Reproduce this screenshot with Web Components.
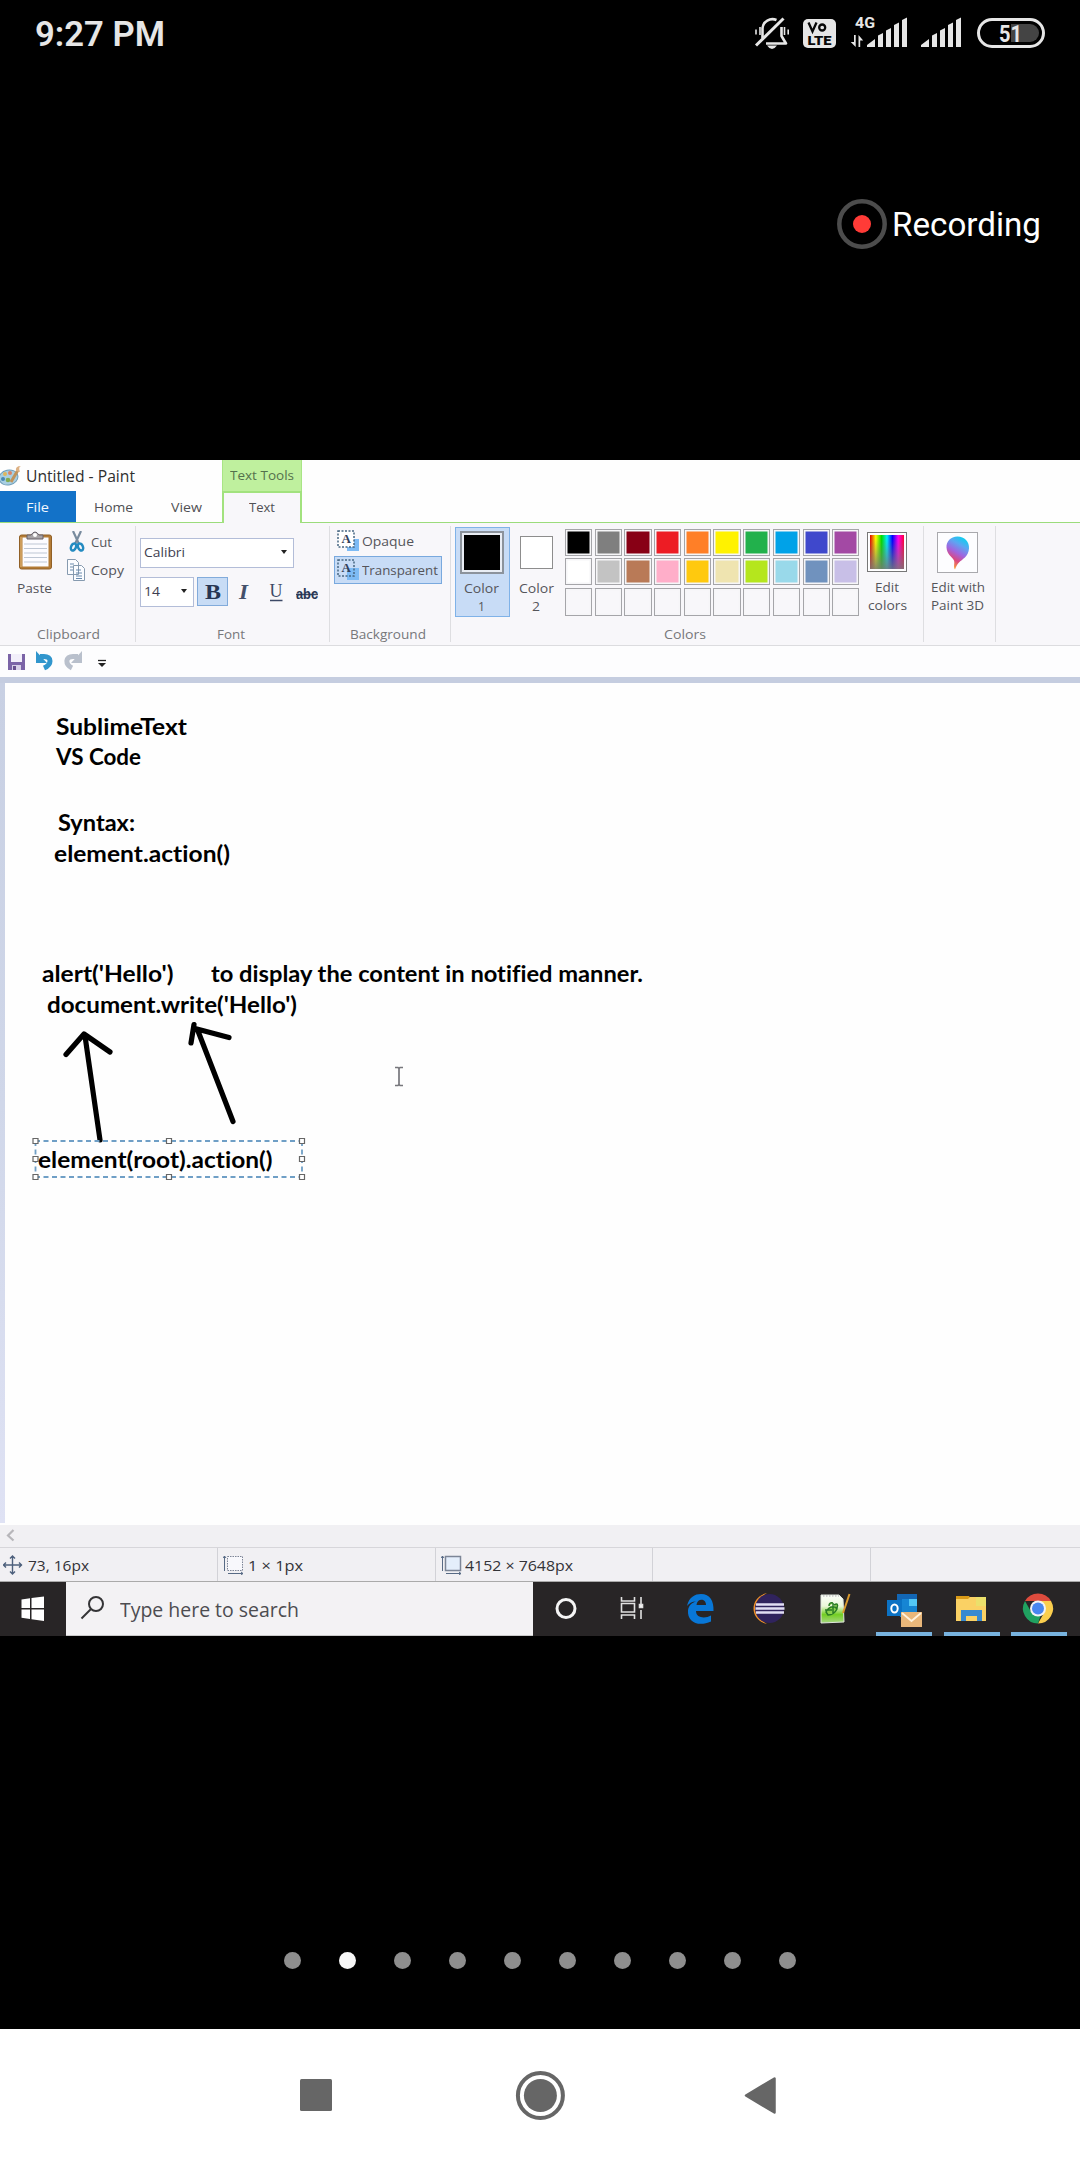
<!DOCTYPE html>
<html lang="en"><head><meta charset="utf-8"><title>Paint session recording</title>
<style>
html,body{margin:0;background:#000}
body{width:1080px;height:2160px;overflow:hidden;font-family:"Open Sans","Noto Sans",sans-serif}
</style></head><body>
<phone-screen></phone-screen>
<script>
function define(name, html, after){
  customElements.define(name, class extends HTMLElement{
    connectedCallback(){
      if(this.shadowRoot) return;
      const root=this.attachShadow({mode:'open'});
      const t=document.createElement('template');
      t.innerHTML=typeof html==='function'?html(this):html;
      root.append(t.content.cloneNode(true));
      if(after) after(this,root);
    }
  });
}
/* One line of text, condensed or widened to a set width */
define('fit-text', el=>{
  const w=el.getAttribute('w'), s=el.getAttribute('s')||13.5, h=el.getAttribute('h')||16;
  return `<style>:host{display:block;flex:none;width:${w}px;height:${h}px;line-height:${h}px;font-size:${s}px;white-space:pre}
  span{display:inline-block;transform-origin:0 50%;white-space:pre}</style><span><slot></slot></span>`;
},(el,root)=>{
  const span=root.querySelector('span'), w=parseFloat(el.getAttribute('w'));
  const fit=()=>{span.style.transform='none';const n=span.getBoundingClientRect().width;if(n)span.style.transform=`scaleX(${w/n})`;};
  fit(); requestAnimationFrame(fit);
});

define('status-bar',`<style>:host{display:flex;height:66px;box-sizing:border-box;padding-left:35px;color:#e6e6e6;font-family:Roboto,sans-serif}
fit-text{font-weight:600;margin-top:14px}svg{display:block;margin-left:585px}</style>
<fit-text w="130" s="34.5" h="40">9:27 PM</fit-text>
<svg width="330" height="66" viewBox="750 0 330 66" fill="#e6e6e6" font-family="Roboto">
<g fill="none" stroke="#e6e6e6" stroke-width="2.6"><path d="M762.5 38V28a10 9.5 0 0 1 14-8M781.5 27v9l4.500 7.500H766" stroke-linejoin="round"/><path d="M756 45.500 783.500 18.500" stroke-width="3"/><path d="M760 27v8M756 29.500v5M784.500 27v8M788.200 29.500v5" stroke-width="1.6"/></g>
<path d="M767 45.500h10q-5 7-10 0z"/>
<rect x="803" y="19" width="33" height="29" rx="5"/>
<g fill="none" stroke="#080808" stroke-width="2.3"><path d="M808.500 22.500l4 9 4-9" /><circle cx="822.200" cy="27.500" r="3"/></g>
<text x="807.500" y="44.500" font-size="13" font-weight="900" fill="#080808" textLength="24" lengthAdjust="spacingAndGlyphs">LTE</text>
<text x="855" y="28" font-size="15" font-weight="700" textLength="20" lengthAdjust="spacingAndGlyphs">4G</text>
<path d="M854 35h1.700v12l-5-5h3.300zM858.500 47h1.700v-6.500h3l-4.700-5.500z"/>
<g id="sig"><path d="M867 47v-2l8-6v8zM878 47V35.500l5-2.500v14zM886 47V30.500l5-2.500v19zM894 47V25l5-2.500v24.500zM902 47V20l5-2.500v29.500z"/></g>
<use href="#sig" x="54"/>
<rect x="978.500" y="19.500" width="65" height="27" rx="13.500" fill="none" stroke="#e6e6e6" stroke-width="3"/>
<path d="M1011 24h19a9 9 0 0 1 0 18h-19z" fill="#444"/>
<text x="999" y="42" font-size="24" font-weight="700" textLength="23" lengthAdjust="spacingAndGlyphs">51</text>
</svg>`);

define('recording-badge',`<style>:host{display:flex;align-items:center;height:50px;margin:132.500px 0 0 836.500px;color:#fff;font-family:Roboto,sans-serif}
svg{margin-right:5px}fit-text{margin-top:3px}</style>
<svg width="50" height="50"><circle cx="25" cy="25" r="22.700" fill="none" stroke="#4c4c4c" stroke-width="4.500"/><circle cx="25" cy="25" r="9" fill="#ff3b37"/></svg>
<fit-text w="149" s="33.5" h="50">Recording</fit-text>`);

define('paint-title',`<style>:host{display:block;height:63px;background:#fefefe;color:#505054;flex:none}
.top{display:flex;height:31px}.app{width:222px;display:flex;color:#2e2e2e}.app fit-text{margin:6px 0 0 5px}
.tools{width:78px;background:#bff09e;border:1px solid #a9e585;border-width:0 1px;color:#54704c}
.tools fit-text{margin:4px 0 0 7px}
.tabs{display:flex;height:32px;box-sizing:border-box;border-bottom:1px solid #9bdc7b}
.tabs>div{box-sizing:border-box;padding-top:8px}
.file{width:76px;background:#1372c8;color:#f3f8ff;padding-left:26px}.home{width:95px;padding-left:18px}.view{width:51px}
.text{width:80px;height:32px;border:2px solid #a2e27e;border-bottom:0;background:#f8f7fa;padding-left:25px}
.text fit-text{margin-top:-2px}</style>
<div class="top"><div class="app"><svg width="21" height="31" viewBox="0 0 21 31"><ellipse cx="8.500" cy="17.500" rx="9.500" ry="7.500" transform="rotate(-12 8.500 17.500)" fill="#a8cfe2" stroke="#6f9db8"/><circle cx="3" cy="19" r="2" fill="#4687b4"/><circle cx="5" cy="14" r="2" fill="#dfb65c"/><circle cx="10" cy="13" r="2" fill="#d88365"/><circle cx="8" cy="20" r="2.300" fill="#81aa50"/><path d="M11 22 18 10" stroke="#c0935a" stroke-width="3"/><path d="M16 11q-1-5 5-5-3 1-1 6z" fill="#ddb184"/></svg><fit-text w="109" s="15.5" h="20">Untitled - Paint</fit-text></div>
<div class="tools"><fit-text w="64" s="13.5" h="22">Text Tools</fit-text></div></div>
<div class="tabs"><div class="file"><fit-text w="23">File</fit-text></div><div class="home"><fit-text w="39">Home</fit-text></div><div class="view"><fit-text w="31">View</fit-text></div><div class="text"><fit-text w="26">Text</fit-text></div></div>`);

define('ribbon-group',el=>`<style>:host{display:flex;flex-direction:column;flex:none;width:${el.getAttribute('w')}px;height:122px;background:linear-gradient(#dedee1,#dedee1) right 3px/1px 116px no-repeat}
.c{height:103px}.l{display:flex;justify-content:center;color:#77777b;padding-right:${el.getAttribute('pr')||0}px}</style><div class="c"><slot></slot></div><div class="l">${el.getAttribute('label')?`<fit-text w="${el.getAttribute('lw')}">${el.getAttribute('label')}</fit-text>`:''}</div>`);

define('clipboard-tools',`<style>:host{display:flex}.p{width:67px;padding-top:8px}.p svg{display:block;margin-left:18px}.p fit-text{margin:8px 0 0 16.500px}
.r{display:flex;align-items:center;height:22px}.r svg{width:20px;margin-right:4px}.cc{padding-top:8px}.r+.r{margin-top:6px}</style>
<div class="p"><svg width="35" height="41"><rect x="1.500" y="4" width="32" height="34" rx="2" fill="#b47c36" stroke="#916026"/><path d="M3 6v30" stroke="#d6a968" stroke-width="1.500"/><path d="M4.500 6.500h26v29h-26z" fill="#fcfcff"/><path d="M6 13h23M6 17.500h23M6 22h23M6 26.500h23M6 31h23" stroke="#bec7d4"/><path d="M9 8V4h4q4-6 8 0h4v4z" fill="#a7a3a6" stroke="#666069"/><circle cx="17" cy="4" r="2" fill="#fff"/></svg><fit-text w="35">Paste</fit-text></div>
<div class="cc"><div class="r"><svg height="22"><path d="M6 0 12 13M14 0 8 13" stroke="#788b9e" stroke-width="2.200"/><ellipse cx="6.500" cy="16" rx="2.400" ry="3.700" transform="rotate(25 6.500 16)" fill="none" stroke="#248bc1" stroke-width="2.500"/><ellipse cx="13.500" cy="16" rx="2.400" ry="3.700" transform="rotate(-25 13.500 16)" fill="none" stroke="#248bc1" stroke-width="2.500"/></svg><fit-text w="21">Cut</fit-text></div>
<div class="r"><svg height="22"><g fill="#fbfcff" stroke="#869aaf"><path d="M.500.500h8l3 3v12h-11zM6.500 6.500h8l3 3v12h-11z"/><path d="M3 5h4M3 8h3M3 11h3M9 11h5M9 14h6M9 17h6M9 19.500h6" stroke="#6889ac"/></g></svg><fit-text w="33">Copy</fit-text></div></div>`);

define('font-tools',`<style>:host{display:block;padding:15px 0 0 4px;color:#3e3e50}
.box{box-sizing:border-box;height:30px;border:1px solid #b3bdd8;background:#fff;display:flex;align-items:center;justify-content:space-between;padding:0 6px 2px 3px}
.a{width:0;height:0;border:3.500px solid transparent;border-top:4px solid #222;border-bottom:0}
.row{display:flex;margin-top:9px;align-items:flex-start}
svg{display:block}</style>
<div class="box" style="width:154px"><fit-text w="41">Calibri</fit-text><i class="a"></i></div>
<div class="row"><div class="box" style="width:54px"><fit-text w="16">14</fit-text><i class="a"></i></div>
<svg width="134" height="32" viewBox="194 577 134 32" fill="#283653" font-family="Liberation Serif,serif"><rect x="197.500" y="577.500" width="30" height="28" fill="#c8dcf5" stroke="#82abdb"/><text x="205" y="599" font-size="22" font-weight="700" textLength="16" lengthAdjust="spacingAndGlyphs">B</text><text x="239" y="599" font-size="22" font-style="italic" font-weight="700" fill="#44506a" textLength="9" lengthAdjust="spacingAndGlyphs">I</text><text x="269.500" y="597" font-size="19" fill="#3c4966" textLength="13" lengthAdjust="spacingAndGlyphs">U</text><path d="M270 600.500h12.500M296 594.500h22" stroke="#3c4966" stroke-width="1.500"/><text x="296" y="599" font-size="14" font-weight="700" font-family="Liberation Sans" textLength="22" lengthAdjust="spacingAndGlyphs">abc</text></svg></div>`);

define('background-tools',`<style>:host{display:block;padding:4px 0 0 4px}.r{box-sizing:border-box;width:108px;height:28px;border:1px solid transparent;display:flex;padding-left:2px}
.r+.r{margin-top:1px;border-color:#79a9de;background:#c8dcf6}fit-text{margin:5px 0 0 3px}svg{margin-top:2px}</style>
<div class="r"><svg width="22" height="22"><path d="M10 9h12v12H10z" fill="#7dbbf5"/><path d="M1 1h16v16H1z" fill="#fff" stroke="#476783" stroke-width="1.500" stroke-dasharray="2 1.500"/><text x="4.500" y="13" font-size="13" font-weight="700" font-family="Liberation Serif" fill="#32405b">A</text></svg><fit-text w="52">Opaque</fit-text></div>
<div class="r"><svg width="22" height="22"><path d="M10 9h12v12H10z" fill="#7dbbf5"/><path d="M1 1h16v16H1z" fill="none" stroke="#476783" stroke-width="1.500" stroke-dasharray="2 1.500"/><text x="4.500" y="13" font-size="13" font-weight="700" font-family="Liberation Serif" fill="#32405b">A</text></svg><fit-text w="76">Transparent</fit-text></div>`);

const paints=['#000','#7f7f7f','#880015','#ed1c24','#ff7f27','#fff200','#22b14c','#00a2e8','#3f48cc','#a349a4','#fff','#c3c3c3','#b97a57','#ffaec9','#ffc90e','#efe4b0','#b5e61d','#99d9ea','#7092be','#c8bfe7',...Array(10).fill('')];
define('color-tools',`<style>:host{display:flex;padding:4px 0 0 4px}
.c{box-sizing:border-box;display:flex;flex-direction:column;align-items:center;height:90px}
.c1{width:55px;border:1px solid #7fb2e8;background:#c8dcf6;padding-top:3px;padding-right:2px}.s1{box-sizing:border-box;width:44px;height:43px;background:#000;border:2px solid #8c939c;box-shadow:inset 0 0 0 2px #e9edf4}
.c1 fit-text{margin-top:6px}.c1 fit-text+fit-text,.c2 fit-text+fit-text{margin-top:2px}
.c2{width:52px;padding-top:9px}.s2{box-sizing:border-box;width:33px;height:33px;background:#fff;border:1px solid #8d8d8d}
.c2 fit-text{margin-top:11px}
.pal{display:grid;grid-template-columns:repeat(10,27.200px);grid-template-rows:27px 27px 28px;column-gap:2.500px;row-gap:2.500px;margin:1.500px 0 0 3px;height:88px}
.pal i{box-sizing:border-box;border:1px solid #a5a5a9;box-shadow:inset 0 0 0 1.500px #f6f6f8}
.e{display:flex;flex-direction:column;align-items:center;width:56px;padding-top:5px}.e fit-text{margin-top:7px}.e fit-text+fit-text{margin-top:2px}
.sp{box-sizing:border-box;width:40px;height:40px;border:1px solid #777;box-shadow:inset 0 0 0 1.500px #fff;padding:2px}.sp b{display:block;height:100%;background:linear-gradient(transparent 10%,#777d),linear-gradient(90deg,#e10000,#ff0 17%,#0d0 34%,#0ef 50%,#00f 66%,#f0e 83%,#f03)}</style>
<div class="c c1"><i class="s1"></i><fit-text w="35">Color</fit-text><fit-text w="7">1</fit-text></div>
<div class="c c2"><i class="s2"></i><fit-text w="35">Color</fit-text><fit-text w="8">2</fit-text></div>
<div class="pal">${paints.map(p=>`<i style="background:${p||'#f8f7fa'}"></i>`).join('')}</div>
<div class="e"><div class="sp"><b></b></div><fit-text w="24">Edit</fit-text><fit-text w="39">colors</fit-text></div>`);

define('paint3d-tool',`<style>:host{display:block;padding-top:9px}svg{display:block;margin-left:13px}fit-text{margin:6px 0 0 6.500px}fit-text+fit-text{margin-top:2px}</style>
<svg width="41" height="41"><defs><linearGradient id="g" x1=".7" y1="0" x2=".3" y2="1"><stop stop-color="#08d2ef"/><stop offset=".25" stop-color="#5da5f2"/><stop offset=".5" stop-color="#a064df"/><stop offset=".72" stop-color="#dc477e"/><stop offset="1" stop-color="#ffb22e"/></linearGradient></defs><rect x=".500" y=".500" width="40" height="40" fill="#fdfdff" stroke="#a9a9ad"/><path d="M20.500 4.500c7 0 12 5 11.500 12-.500 8-7 11-10 14-2 2-3 4-4 7-2-3 0-6-1-9-2-4-7-6-7.500-13-.300-6 4-11 11-11z" fill="url(#g)"/></svg>
<fit-text w="54">Edit with</fit-text><fit-text w="53">Paint 3D</fit-text>`);

define('paint-ribbon',`<style>:host{display:flex;height:123px;box-sizing:border-box;background:#f8f7fa;border-bottom:1px solid #dcdcdf;color:#55555a;flex:none}</style>
<ribbon-group w="136" label="Clipboard" lw="63"><clipboard-tools></clipboard-tools></ribbon-group>
<ribbon-group w="194" label="Font" lw="28" pr="5"><font-tools></font-tools></ribbon-group>
<ribbon-group w="121" label="Background" lw="76" pr="5"><background-tools></background-tools></ribbon-group>
<ribbon-group w="473" label="Colors" lw="42" pr="6"><color-tools></color-tools></ribbon-group>
<ribbon-group w="72"><paint3d-tool></paint3d-tool></ribbon-group>`);

define('quick-access',`<style>:host{display:block;height:31px;background:#fdfdfe;flex:none}svg{display:block}</style>
<svg width="120" height="31" viewBox="0 646 120 31"><path d="M8 654h17v16H8z" fill="#7b64a7"/><path d="M11 654h11v8H11z" fill="#f2effa"/><path d="M12 665h9v5h-9z" fill="#d7cfe7"/><path d="M13 666h3v4h-3z" fill="#68508f"/>
<path d="M40 656.500h4c8 0 8 8 0 11.500" fill="none" stroke="#3196cd" stroke-width="5"/><path d="M36 651v12h11z" fill="#3196cd"/>
<path d="M78 656.500h-5c-8 0-8 8-1 11.500" fill="none" stroke="#b9c0cc" stroke-width="5"/><path d="M82 651v12H71z" fill="#b9c0cc"/><path d="M98 660.500h8" stroke="#222" stroke-width="1.300"/><path d="M98 663h8l-4 4z" fill="#222"/></svg>`);

define('paint-canvas',`<style>:host{display:block;position:relative;height:848px;box-sizing:border-box;border-top:6px solid #c5cde0;background:linear-gradient(#c8d0e3,#d0d7e9 50%,#dfe2f4) 0 0/5px 840px no-repeat #fefefe;color:#000;font-family:Lato,"Open Sans",sans-serif;font-weight:700;font-variant-ligatures:none;flex:none}
fit-text{position:absolute}svg{position:absolute;left:0;top:0}</style>
<svg width="660" height="540" viewBox="0 683 660 540"><g fill="none" stroke="#000" stroke-width="5.200" stroke-linecap="round" stroke-linejoin="round"><path d="M66 1054.500 84 1034l26 18M85 1036 100 1140M191 1043 194 1024.500M195 1028.500l34 9M198 1031 233 1121.500"/></g>
<g fill="none" stroke="#6f9fc6" stroke-width="1.800" stroke-dasharray="5 3.500"><path d="M35 1141H302M35 1177H302M35.500 1141v36M302 1141v36"/></g>
<g fill="#fff" stroke="#666" stroke-width="1.200"><path d="M33 1138.500h5v5h-5zM166.500 1138.500h5v5h-5zM299.500 1138.500h5v5h-5zM33 1156.500h5v5h-5zM299.500 1156.500h5v5h-5zM33 1174.500h5v5h-5zM166.500 1174.500h5v5h-5zM299.500 1174.500h5v5h-5z"/></g>
<path d="M395 1067.500h3l1 1 1-1h3M399 1068v17M395 1085.500h3l1-1 1 1h3" fill="none" stroke="#77777c" stroke-width="1.700"/></svg>
${[['SublimeText',56,131,734.3],['VS Code',56,85,765],['Syntax:',58,77,830.5],['element.action()',54,176,861.7],["alert('Hello')",42,131.500,981.7],['to display the content in notified manner.',211,432,981.7],["document.write('Hello')",47,250,1013],['element(root).action()',38,234.500,1168]].map(([t,x,w,b])=>`<fit-text s="23.5" h="30" w="${w}" style="left:${x}px;top:${b-9.1-15-683+.5}px">${t}</fit-text>`).join('')}`);

define('paint-status',`<style>:host{display:block;background:#f1f0f3;color:#333338;flex:none;height:57px}
.h{height:22px;border-bottom:1px solid #d7d6da}.s{display:flex;height:33px;border-bottom:1px solid #aaa}
.s>div{box-sizing:border-box;height:33px;border-right:1px solid #d2d2d7;display:flex;padding-top:7px}
svg{display:block;flex:none}fit-text{margin-top:1px}</style>
<div class="h"><svg width="20" height="22"><path d="M13.500 5 8 10.500l5.500 5" fill="none" stroke="#b7b6ba" stroke-width="2.200"/></svg></div>
<div class="s"><div style="width:218px;padding-left:3px"><svg width="25" height="20"><path d="M9.500 1v18M0 10h19M7 3.500 9.500 1 12 3.500M7 16.500 9.500 19l2.500-2.500M3 7.500.500 10 3 12.500M16 7.500l2.500 2.500-2.500 2.500" fill="none" stroke="#4d607c" stroke-width="1.400"/></svg><fit-text w="61" s="14.5" h="19">73, 16px</fit-text></div>
<div style="width:218px;padding-left:5px"><svg width="25" height="20"><path d="M4.500 1.500h15v14h-15z" fill="#f8f8fc" stroke="#7c8596" stroke-dasharray="1.500 1"/><path d="M1.500 1v15M5 18.500h15M0 3l1.500-2L3 3M18 17l2 1.500-2 1.500" fill="none" stroke="#576a85"/></svg><fit-text w="55" s="14.5" h="19">1 × 1px</fit-text></div>
<div style="width:217px;padding-left:5px"><svg width="24" height="20"><path d="M4.500 1.500h15v14h-15z" fill="#e4eefb" stroke="#7c8596" stroke-width="1.500"/><path d="M1.500 1v15M5 18.500h15M0 3l1.500-2L3 3M18 17l2 1.500-2 1.500" fill="none" stroke="#576a85"/></svg><fit-text w="108" s="14.5" h="19">4152 × 7648px</fit-text></div>
<div style="width:218px"></div></div>`);

define('task-app',el=>`<style>:host{display:block;box-sizing:border-box;width:56px;height:54px;border-bottom:4px solid ${el.hasAttribute('open')?'#78b3df':'transparent'}}::slotted(svg){display:block}</style><slot></slot>`);

define('task-bar',`<style>:host{display:flex;height:54px;background:#282526;flex:none}
.start{width:66px}.search{box-sizing:border-box;width:467px;background:#f3f2f4;border-bottom:1px solid #c9c9c9;display:flex}.search fit-text{margin:13.500px 0 0 15px;color:#4c4c50}
.apps{display:flex;padding-left:5px;gap:11.600px}svg{display:block}</style>
<div class="start"><svg width="66" height="54"><path d="M21.500 17.500 30 16.300V26h-8.500zM31.500 16 44 14.500V26H31.500zM21.500 27.500H30v9.500l-8.500-1.200zM31.500 27.500H44V39l-12.500-1.700z" fill="#fff"/></svg></div>
<div class="search"><svg width="39" height="54"><g fill="none" stroke="#343436" stroke-width="2"><circle cx="30" cy="22" r="7"/><path d="m25 27-9.500 9.500"/></g></svg><fit-text w="179" s="19.5" h="27">Type here to search</fit-text></div>
<div class="apps">
<task-app><svg width="56" height="50"><circle cx="28" cy="26.500" r="9" fill="none" stroke="#f5f5f5" stroke-width="3"/></svg></task-app>
<task-app><svg width="56" height="50" fill="none" stroke="#e1e1e1" stroke-width="1.600"><path d="M15.500 15v4h13v-4M15.500 37v-4h13v4M15.500 21.500h13v8.500h-13zM35 15v7M35 28v9"/><path d="M33.500 22.500h3v3h-3z" fill="#fff"/></svg></task-app>
<task-app><svg width="56" height="50"><path d="M14 24C16 15 22 12 28 12c9 0 13 7 12.500 17H23c0 7 9 8 15 4.500v6c-13 6-24 0-23-11 .500-5 4-8 8-9-4 0-7 2-9 4.500zm9.500-1H33c0-7-9-7-9.500 0z" fill="#0877d7"/></svg></task-app>
<task-app><svg width="56" height="50"><path d="M26 11C8 15 8 38 26 42 14 36 14 17 26 11z" fill="#f3922a"/><circle cx="28.500" cy="26.500" r="14.500" fill="#30235d"/><path d="M15 22.500h28M14.500 26.500h29M15 30.500h28" stroke="#e1def3" stroke-width="2.300"/></svg></task-app>
<task-app><svg width="56" height="50"><defs><linearGradient id="n" x2="0" y2="1"><stop stop-color="#fdfffb"/><stop offset=".4" stop-color="#eaf7d8"/><stop offset=".7" stop-color="#73ce23"/><stop offset="1" stop-color="#a7d783"/></linearGradient></defs><path d="M13 13h18l4 4 1 23-23 1z" fill="url(#n)" stroke="#dfe6dc"/><path d="M15 14h16" stroke="#aaa" stroke-dasharray="1.500 1.500"/><path d="M18 30q3-6 9-5l2 2q-3 6-9 6zM21 24q0-4 4-3M25 21v11M17 28h7M26 23q5-3 3 3" fill="#8ed34e" stroke="#2b7d25" stroke-width="1.500"/><path d="m35 31 6.500-19" stroke="#d9992c" stroke-width="2"/></svg></task-app>
<task-app open><svg width="56" height="50"><path d="M21 12h20v22H21z" fill="#1266b4"/><path d="M26 17h7v7h-7z" fill="#1685d4"/><path d="M33 17h8v7h-8z" fill="#52c7f5"/><path d="M24 24h17v11H24z" fill="#1684d1"/><path d="M11 18h15v16H11z" fill="#0b72c4"/><ellipse cx="18.500" cy="26.500" rx="3.200" ry="4" fill="none" stroke="#fff" stroke-width="2"/><path d="M25 30h21v15H25z" fill="#e9b77a"/><path d="m26 31 9.500 8L45 31" fill="none" stroke="#fff3de" stroke-width="1.800"/></svg></task-app>
<task-app open><svg width="56" height="50"><path d="M12 14h13l2 3h15v6H12z" fill="#d99a17"/><path d="M12 17h12l2-2h16v24H12z" fill="#fad164"/><path d="M32 15h10v9H32z" fill="#ebe06b"/><path d="M17 39V28h21v11h-5v-5H22v5z" fill="#378ad0"/></svg></task-app>
<task-app open><svg width="56" height="50" viewBox="-27 -26.500 56 50"><path d="M-13 -7.500A15 15 0 0 1 13 -7.500H0z" fill="#dd4b3d"/><path d="M13 -7.500A15 15 0 0 1 0 15L6.500 3.500 0 -7.500z" fill="#fbce4e"/><path d="M0 15A15 15 0 0 1-13-7.500L-6.500 4 3 6z" fill="#20a160"/><circle r="8" fill="#f3f3f3"/><circle r="6" fill="#4986ef"/></svg></task-app>
</div>`);

define('page-dots',`<style>:host{display:flex;gap:38px;margin:316px 0 0 284px;height:17px}i{width:17px;height:17px;border-radius:50%;background:#8e8e8e}i:nth-of-type(2){background:#f6f6f6}</style>${'<i></i>'.repeat(10)}`);

define('nav-bar',`<style>:host{display:block;height:131px;background:#fff;margin-top:auto}svg{display:block}</style>
<svg width="1080" height="131" viewBox="0 2029 1080 131" fill="#666"><rect x="300" y="2079" width="32" height="32" rx="1.500"/><circle cx="540.400" cy="2095.500" r="22.500" fill="none" stroke="#666" stroke-width="4"/><circle cx="540.400" cy="2095.500" r="16.500"/><path d="M746 2095.500 774.500 2078.500v34z" stroke="#666" stroke-width="2.500" stroke-linejoin="round"/></svg>`);

define('paint-window',`<style>:host{display:flex;flex-direction:column;height:1176px;margin-top:211.500px}</style>
<paint-title></paint-title><paint-ribbon></paint-ribbon><quick-access></quick-access><paint-canvas></paint-canvas><paint-status></paint-status><task-bar></task-bar>`);

define('phone-screen',`<style>:host{display:flex;flex-direction:column;width:1080px;height:2160px;background:#000}status-bar,recording-badge,paint-window,page-dots,nav-bar{flex:none}</style>
<status-bar></status-bar><recording-badge></recording-badge><paint-window></paint-window><page-dots></page-dots><nav-bar></nav-bar>`);
</script></body></html>
